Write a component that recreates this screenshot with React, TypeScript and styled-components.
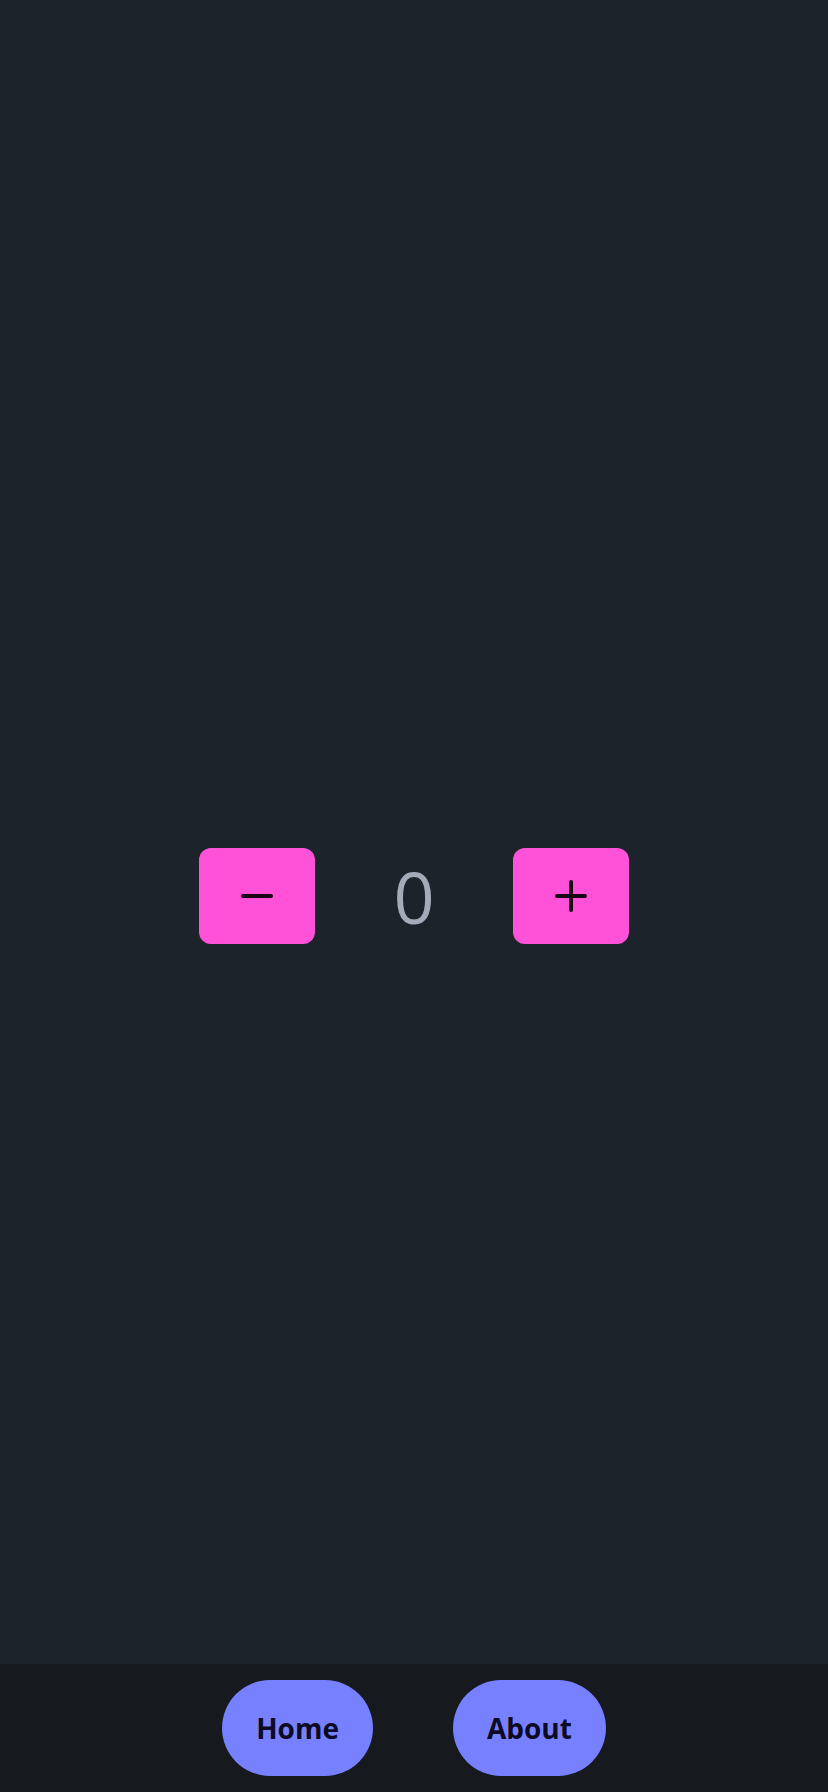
import styled, { createGlobalStyle } from 'styled-components';
import { useState } from 'react';

const GlobalStyle = createGlobalStyle`
  html, body {
    margin: 0;
    padding: 0;
    background: #1d232b;
    font-family: 'Open Sans', 'Liberation Sans', sans-serif;
  }
`;

const MinusIcon = () => (
  <svg width="48" height="48" viewBox="0 0 24 24" fill="none" stroke="currentColor" strokeWidth="2" strokeLinecap="round">
    <path d="M5 12h14" />
  </svg>
);

const PlusIcon = () => (
  <svg width="48" height="48" viewBox="0 0 24 24" fill="none" stroke="currentColor" strokeWidth="2" strokeLinecap="round">
    <path d="M5 12h14" />
    <path d="M12 5v14" />
  </svg>
);

const App = () => {
  const [count, setCount] = useState(0);

  return (
    <>
      <GlobalStyle />
      <Main>
        <Counter>
          <StepButton onClick={() => setCount(count - 1)} aria-label="decrement">
            <MinusIcon />
          </StepButton>
          <Count>{count}</Count>
          <StepButton onClick={() => setCount(count + 1)} aria-label="increment">
            <PlusIcon />
          </StepButton>
        </Counter>
      </Main>
      <NavBar>
        <NavButton>Home</NavButton>
        <NavButton>About</NavButton>
      </NavBar>
    </>
  );
};

export default App;

const Main = styled.main`
  min-height: 100vh;
  display: flex;
  align-items: center;
  justify-content: center;
`;

const Counter = styled.div`
  display: flex;
  align-items: center;
  gap: 78px;
`;

const StepButton = styled.button`
  width: 116px;
  height: 96px;
  border: none;
  border-radius: 12px;
  background: #ff52d9;
  color: #1a0716;
  display: flex;
  align-items: center;
  justify-content: center;
  padding: 0;
  cursor: pointer;
`;

const Count = styled.span`
  font-family: 'Open Sans', 'Liberation Sans', sans-serif;
  font-size: 72px;
  font-weight: 400;
  color: #a3abb8;
  line-height: 1;
`;

const NavBar = styled.nav`
  position: fixed;
  left: 0;
  right: 0;
  bottom: 0;
  height: 128px;
  box-sizing: border-box;
  background: #16191e;
  display: flex;
  align-items: center;
  justify-content: center;
  gap: 80px;
`;

const NavButton = styled.button`
  height: 96px;
  padding: 0 34px;
  border: none;
  border-radius: 48px;
  background: #7780ff;
  color: #0d0b24;
  font-family: 'Open Sans', 'Liberation Sans', sans-serif;
  font-size: 28px;
  font-weight: 700;
  cursor: pointer;
`;
